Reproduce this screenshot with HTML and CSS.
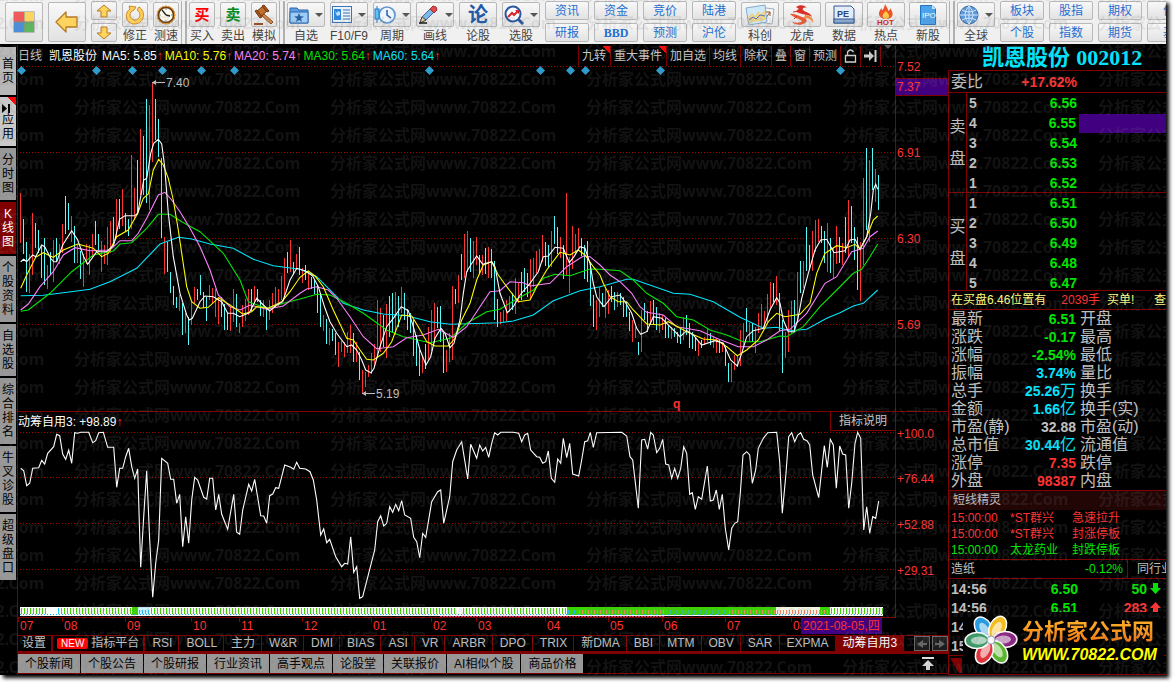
FILE: index.html
```html
<!DOCTYPE html>
<html lang="zh-CN">
<head>
    <meta charset="UTF-8">
    <meta name="viewport" content="width=device-width, initial-scale=1.0">
    <title>凯恩股份 002012</title>
    <link rel="stylesheet" href="styles.css">
</head>
<body>
    <div class="app">
        <!-- Toolbar -->
        <header class="toolbar">
            <div class="group">
                <button class="big" aria-label="主页"><svg width="22" height="22" viewBox="0 0 22 22"><rect x=".5" y=".5" width="21" height="21" fill="#888"/><rect x="1" y="1" width="9.500" height="9.500" fill="#f05a5a"/><rect x="11.500" y="1" width="9.500" height="9.500" fill="#f7d560"/><rect x="1" y="11.500" width="9.500" height="9.500" fill="#4a8fd8"/><rect x="11.500" y="11.500" width="9.500" height="9.500" fill="#5cb85c"/></svg></button>
                <button class="big" aria-label="返回"><svg width="24" height="22" viewBox="0 0 24 22"><path d="M1 11 11 1V6H22V16H11V21Z" fill="#ffd45e" stroke="#b57a22" stroke-width="1.300" stroke-linejoin="round"/></svg></button>
                <div class="stack">
                    <button class="small" aria-label="向上"><svg width="16" height="14" viewBox="0 0 16 14"><path d="M8 1 15 7H11V13H5V7H1Z" fill="#ffd45e" stroke="#b57a22" stroke-linejoin="round"/></svg></button>
                    <button class="small" aria-label="向下"><svg width="16" height="14" viewBox="0 0 16 14"><path d="M8 13 1 7H5V1H11V7H15Z" fill="#ffd45e" stroke="#b57a22" stroke-linejoin="round"/></svg></button>
                </div>
                <button class="tool narrow"><span class="face"><svg width="20" height="20" viewBox="0 0 20 20"><path d="M4 1 11 2 9 5C6 6 5 8 5 10A5 5 0 0 0 15 10C15 8 14 6 12 5L14 2C21 6 20 18 10 19C0 19-1 8 5 4Z" fill="#ffcf5a" stroke="#c98a2a"/></svg></span><span>修正</span></button>
                <button class="tool narrow"><span class="face"><svg width="20" height="20" viewBox="0 0 20 20"><circle cx="10" cy="10" r="8" fill="#fffdf0" stroke="#6b3a12" stroke-width="2.500"/><circle cx="10" cy="10" r="8.800" fill="none" stroke="#e8a33a"/><path d="M10 10 6 5M10 10 14 11" stroke="#222" stroke-width="1.300"/><path d="M10 3V5M10 15V17M3 10H5M15 10H17" stroke="#888"/></svg></span><span>测速</span></button>
            </div>
            <i class="divider"></i>
            <div class="group">
                <button class="tool narrow"><span class="face buy">买</span><span>买入</span></button>
                <button class="tool narrow"><span class="face sell">卖</span><span>卖出</span></button>
                <button class="tool narrow"><span class="face"><svg width="22" height="22" viewBox="0 0 22 22"><path d="M11 10 20 18 18 20 9 12Z" fill="#d58a4a" stroke="#8a4a1a"/><path d="M3 8 10 2 14 7 7 13Z" fill="#c0702c" stroke="#6e3510"/><path d="M2 7 4 6 9 13 7 14ZM9 2 11 1 16 7 14 8Z" fill="#a85a20" stroke="#6e3510"/><path d="M1 19H10V21H1Z" fill="#9a4c1c"/></svg></span><span>模拟</span></button>
            </div>
            <i class="divider"></i>
            <div class="group">
                <button class="tool"><span class="face"><svg width="20" height="18" viewBox="0 0 20 18"><path d="M1 2H8L10 4H19V17H1Z" fill="#5d9de0" stroke="#2d67ac"/><path d="M1 6H19V17H1Z" fill="#9ccbf5" stroke="#2d67ac"/><path d="M10 7 11.300 10.300 15 10.500 12 12.500 13 16 10 14 7 16 8 12.500 5 10.500 8.700 10.300Z" fill="#2a5f9e"/></svg><b class="caret"></b></span><span>自选</span></button>
                <button class="tool"><span class="face"><svg width="20" height="18" viewBox="0 0 20 18"><rect x=".5" y=".5" width="19" height="16" fill="#eaf4ff" stroke="#3b74b8"/><rect x="2" y="3" width="7" height="11" fill="#2e86de"/><path d="M3 5 5 7 6 5 8 6V9L5 10Z" fill="#bde0ff"/><path d="M11 4H18M11 7H18M11 10H18M11 13H18" stroke="#3b6ea8"/></svg><b class="caret"></b></span><span>F10/F9</span></button>
                <button class="tool"><span class="face"><svg width="22" height="20" viewBox="0 0 22 20"><circle cx="13" cy="10" r="8" fill="#edf6ff" stroke="#5f95cc" stroke-width="1.700"/><path d="M13 5V10L17 13" fill="none" stroke="#2a5f9e" stroke-width="1.500"/><path d="M3 1V18" stroke="#2377c8"/><rect x="1" y="4" width="4" height="10" fill="#5ec3f2" stroke="#2377c8"/></svg><b class="caret"></b></span><span>周期</span></button>
                <button class="tool"><span class="face"><svg width="22" height="20" viewBox="0 0 22 20"><path d="M3 18 5 12 15 2 19 5 9 15Z" fill="#7eb7e8" stroke="#336b9e"/><path d="M13 4 16 1Q20 1 20 5L17 8Z" fill="#e04a4a" stroke="#a03030"/><path d="M3 18 5 12 9 15Z" fill="#f3d2a2" stroke="#444"/><path d="M2 18H10" stroke="#111" stroke-width="1.500"/></svg><b class="caret"></b></span><span>画线</span></button>
                <button class="tool"><span class="face lun">论</span><span>论股</span></button>
                <button class="tool"><span class="face"><svg width="20" height="20" viewBox="0 0 20 20"><circle cx="9" cy="9" r="7.500" fill="#f8fbff" stroke="#2c559e" stroke-width="2"/><path d="M14.500 14.500 19 19" stroke="#2c559e" stroke-width="3"/><path d="M4 12 8 8 10 10 14 6" fill="none" stroke="#d8232a" stroke-width="2"/><path d="M11 5H15V9Z" fill="#d8232a"/></svg><b class="caret"></b></span><span>选股</span></button>
                <div class="links"><button>资讯</button><button>资金</button><button>竞价</button><button>陆港</button><button>研报</button><button class="latin">BBD</button><button>预测</button><button>沪伦</button></div>
                <div class="group close">
                    <button class="tool"><span class="face"><svg width="30" height="22" viewBox="0 0 30 22"><path d="M13 3 29 5 27 20 12 18Z" fill="#f5f7f8" stroke="#a5adb5"/><path d="M25 8H21M25 8V12M25 8 21 14" stroke="#9a5028" fill="none"/><path d="M1 4 20 1 22 18 4 21Z" fill="#cde9fa" stroke="#88a9c3"/><path d="M3 13 7 9 10 12 13 7 16 10 20 6V16L4 19Z" fill="#eed38c"/><path d="M4 16 8 13 11 15 15 11 20 12" fill="none" stroke="#4b78c8"/></svg></span><span>科创</span></button>
                    <button class="tool"><span class="face"><svg width="26" height="22" viewBox="0 0 26 22"><path d="M7 3C11 0 16 1 18 4C15 3 13 4 14 6C16 8 22 9 23 13C19 10 14 11 10 9C6 8 7 6 10 5Z" fill="#d93025"/><path d="M1 10C6 9 9 12 13 13C18 14 19 17 16 19C12 22 6 21 3 18C8 19 12 19 13 17C9 14 5 14 1 10Z" fill="#ea5a33"/><path d="M16 11C21 11 25 14 24 19C22 15 19 14 15 14Z" fill="#f08b4b"/><path d="M4 8 10 7M8 12 5 15" stroke="#d93025"/></svg></span><span>龙虎</span></button>
                    <button class="tool"><span class="face"><svg width="22" height="20" viewBox="0 0 22 20"><path d="M1 1H18L21 4V18H1Z" fill="#e3ecf8" stroke="#35598e"/><rect x="1" y="14" width="20" height="4" fill="#8aa9d2" stroke="#35598e"/><text x="4" y="12" class="pe">PE</text></svg></span><span>数据</span></button>
                    <button class="tool"><span class="face"><svg width="20" height="22" viewBox="0 0 20 22"><path d="M9 0C11 4 12 4 12 7 14 6 14 5 14 4 18 9 18 15 10 15 2 15 1 8 6 4 5 8 8 6 9 0Z" fill="#ef5426"/><path d="M10 7C13 10 15 14 10 15 5 14 6 10 10 7Z" fill="#ffcc4a"/><text x="1" y="21" class="hot">HOT</text></svg></span><span>热点</span></button>
                    <button class="tool"><span class="face"><svg width="16" height="20" viewBox="0 0 16 20"><path d="M.5.5H12L15.500 4V19.500H.5Z" fill="#4ba3eb" stroke="#2374bc"/><path d="M12 .5V4H15.500Z" fill="#c9e6ff"/><text x="2" y="13" class="ipo">IPO</text></svg></span><span>新股</span></button>
                </div>
            </div>
            <i class="divider"></i>
            <div class="group">
                <button class="tool"><span class="face"><svg width="20" height="20" viewBox="0 0 20 20"><circle cx="10" cy="10" r="9" fill="#5c97d8" stroke="#3c6ca4"/><path d="M1 10H19M10 1V19M3 5Q10 9 17 5M3 15Q10 11 17 15M10 1Q2 9 10 19M10 1Q18 9 10 19" fill="none" stroke="#d3e8fb"/></svg><b class="caret"></b></span><span>全球</span></button>
                <div class="links"><button>板块</button><button>股指</button><button>期权</button><button>债</button><button>个股</button><button>指数</button><button>期货</button><button>基</button></div>
            </div>
        </header>

        <div class="workspace">
            <!-- Side tabs -->
            <nav class="sidebar">
                <button>首页</button>
                <button class="light"><svg width="10" height="9" viewBox="0 0 10 9"><path d="M0 0 5 4.500 0 9Z"/><path d="M7 0V9" stroke="#000" stroke-width="2"/></svg>应用</button>
                <button>分时图</button>
                <button class="active">K线图</button>
                <button>个股资料</button>
                <button>自选股</button>
                <button>综合排名</button>
                <button>牛叉诊股</button>
                <button>超级盘口</button>
            </nav>

            <!-- Charts -->
            <main class="charts">
                <div class="pane-head">
                    <div class="legend">
                        <span class="muted">日线</span>
                        <span class="name">凯恩股份</span>
                        <span>MA5: 5.85<i>↑</i></span>
                        <span class="ma10">MA10: 5.76<i>↑</i></span>
                        <span class="ma20">MA20: 5.74<i>↑</i></span>
                        <span class="ma30">MA30: 5.64<i>↑</i></span>
                        <span class="ma60">MA60: 5.64<i>↑</i></span>
                    </div>
                    <div class="actions">
                        <button class="flag">九转</button>
                        <button class="flag">重大事件</button>
                        <button>加自选</button>
                        <button>均线</button>
                        <button>除权</button>
                        <button>叠</button>
                        <button>窗</button>
                        <button>预测</button>
                        <button aria-label="解锁"><svg width="13" height="14" viewBox="0 0 13 14"><path d="M1.500 6.500H11.500V13H1.500ZM3.500 6V3Q6.500-1 9.500 3" fill="none" stroke="#d0d0d0" stroke-width="1.300"/></svg></button>
                        <button aria-label="到末尾"><svg width="13" height="12" viewBox="0 0 13 12"><path d="M0 4.500H5V1L10 6 5 11V7.500H0Z" fill="#d0d0d0"/><path d="M11.500 0V12" stroke="#d0d0d0" stroke-width="2"/></svg></button>
                        <button aria-label="更多"><b class="caret"></b></button>
                    </div>
                </div>
                <svg id="priceChart" viewBox="18 66 930 346"></svg>
                <div class="pane-head sub">
                    <div class="legend"><span>动筹自用3: +98.89<i>↑</i></span></div>
                    <div class="actions"><button class="note">指标说明</button></div>
                </div>
                <svg id="indicatorChart" viewBox="18 431 930 204"></svg>

                <div class="tabs">
                    <button>设置</button>
                    <button class="platform"><span class="new">NEW</span>指标平台</button>
                    <button>RSI</button><button>BOLL</button><button>主力</button><button>W&amp;R</button><button>DMI</button><button>BIAS</button><button>ASI</button><button>VR</button><button>ARBR</button><button>DPO</button><button>TRIX</button><button>新DMA</button><button>BBI</button><button>MTM</button><button>OBV</button><button>SAR</button><button>EXPMA</button>
                    <button class="active">动筹自用3</button>
                    <div class="scroll">
                        <button aria-label="向左"><svg width="10" height="8" viewBox="0 0 10 8"><path d="M0 4 6 0V3H10V5H6V8Z" fill="#666"/></svg></button>
                        <button aria-label="向右"><svg width="10" height="8" viewBox="0 0 10 8"><path d="M10 4 4 0V3H0V5H4V8Z" fill="#666"/></svg></button>
                    </div>
                </div>
                <div class="news">
                    <button>个股新闻</button><button>个股公告</button><button>个股研报</button><button>行业资讯</button><button>高手观点</button><button>论股堂</button><button>关联报价</button><button>AI相似个股</button><button>商品价格</button>
                    <svg class="top" width="12" height="13" viewBox="0 0 12 13"><path d="M0 0H12V2H0ZM6 3 12 9H8V13H4V9H0Z" fill="#ddd"/></svg>
                </div>
            </main>

            <!-- Quote panel -->
            <aside class="quote">
                <h1>凯恩股份 <span>002012</span></h1>
                <div class="panel">
                    <div class="ratio"><span>委比</span><b class="red">+17.62%</b></div>
                    <div class="book">
                        <div class="side">卖<br>盘</div>
                        <table>
                            <tr><th>5</th><td>6.56</td><td></td></tr>
                            <tr><th>4</th><td>6.55</td><td class="fill"></td></tr>
                            <tr><th>3</th><td>6.54</td><td></td></tr>
                            <tr><th>2</th><td>6.53</td><td></td></tr>
                            <tr><th>1</th><td>6.52</td><td></td></tr>
                        </table>
                    </div>
                    <div class="book bids">
                        <div class="side">买<br>盘</div>
                        <table>
                            <tr><th>1</th><td>6.51</td><td></td></tr>
                            <tr><th>2</th><td>6.50</td><td></td></tr>
                            <tr><th>3</th><td>6.49</td><td></td></tr>
                            <tr><th>4</th><td>6.48</td><td></td></tr>
                            <tr><th>5</th><td>6.47</td><td></td></tr>
                        </table>
                    </div>
                    <div class="ticker"><span>在买盘6.46位置有</span><span class="red">2039手</span><span>买单!</span><span class="next">查</span></div>
                    <table class="stats">
                        <tr><th>最新</th><td class="green">6.51</td><th>开盘</th><td></td></tr>
                        <tr><th>涨跌</th><td class="green">-0.17</td><th>最高</th><td></td></tr>
                        <tr><th>涨幅</th><td class="green">-2.54%</td><th>最低</th><td></td></tr>
                        <tr><th>振幅</th><td class="cyan">3.74%</td><th>量比</th><td></td></tr>
                        <tr><th>总手</th><td class="cyan">25.26<span>万</span></td><th>换手</th><td></td></tr>
                        <tr><th>金额</th><td class="cyan">1.66<span>亿</span></td><th>换手(实)</th><td></td></tr>
                        <tr><th>市盈(静)</th><td>32.88</td><th>市盈(动)</th><td></td></tr>
                        <tr><th>总市值</th><td class="cyan">30.44<span>亿</span></td><th>流通值</th><td class="cyan">30</td></tr>
                        <tr><th>涨停</th><td class="red">7.35</td><th>跌停</th><td></td></tr>
                        <tr><th>外盘</th><td class="red">98387</td><th>内盘</th><td class="green">15</td></tr>
                    </table>
                    <h2>短线精灵</h2>
                    <table class="alerts">
                        <tr class="red"><td>15:00:00</td><td>*ST群兴</td><td>急速拉升</td></tr>
                        <tr class="red"><td>15:00:00</td><td>*ST群兴</td><td>封涨停板</td></tr>
                        <tr class="green"><td>15:00:00</td><td>太龙药业</td><td>封跌停板</td></tr>
                    </table>
                    <div class="sector"><span>造纸</span><span class="green">-0.12%</span><a href="#">同行业</a></div>
                    <table class="trades">
                        <tr><th>14:56</th><td>6.50</td><td>50</td><td><svg width="11" height="12" viewBox="0 0 11 12"><path d="M3 0H8V5H11L5.500 11 0 5H3Z" fill="#00e600"/></svg></td></tr>
                        <tr><th>14:56</th><td>6.51</td><td class="red">283</td><td><svg width="11" height="12" viewBox="0 0 11 12"><path d="M3 11H8V6H11L5.500 0 0 6H3Z" fill="#ff3232"/></svg></td></tr>
                        <tr><th>14</th><td></td><td></td><td></td></tr>
                        <tr><th>15</th><td></td><td></td><td></td></tr>
                    </table>
                    <div class="panel-foot"><svg width="12" height="15" viewBox="0 0 12 15"><path d="M0 0H12V15H9Z" fill="#800000"/></svg></div>
                </div>
                <div class="brand">
                    <svg width="54" height="52" viewBox="0 0 54 52">
                        <g stroke="#fff" stroke-width="1.500">
                            <ellipse cx="27" cy="12" rx="8" ry="12" transform="rotate(-32 27 26)" fill="#2b9be0"/>
                            <ellipse cx="27" cy="12" rx="8" ry="12" transform="rotate(28 27 26)" fill="#f2bd22"/>
                            <ellipse cx="27" cy="12" rx="8" ry="12" transform="rotate(88 27 26)" fill="#8d2483"/>
                            <ellipse cx="27" cy="12" rx="8" ry="12" transform="rotate(148 27 26)" fill="#5cb531"/>
                            <ellipse cx="27" cy="12" rx="8" ry="12" transform="rotate(208 27 26)" fill="#e0343c"/>
                            <ellipse cx="27" cy="12" rx="8" ry="12" transform="rotate(268 27 26)" fill="#3d9a68"/>
                        </g>
                        <g fill="#fff" opacity=".6">
                            <ellipse cx="27" cy="14" rx="4" ry="8" transform="rotate(-32 27 26)"/>
                            <ellipse cx="27" cy="14" rx="4" ry="8" transform="rotate(28 27 26)"/>
                            <ellipse cx="27" cy="14" rx="4" ry="8" transform="rotate(88 27 26)"/>
                            <ellipse cx="27" cy="14" rx="4" ry="8" transform="rotate(148 27 26)"/>
                            <ellipse cx="27" cy="14" rx="4" ry="8" transform="rotate(208 27 26)"/>
                            <ellipse cx="27" cy="14" rx="4" ry="8" transform="rotate(268 27 26)"/>
                        </g>
                        <circle cx="27" cy="26" r="4" fill="#fff" stroke="#9ab"/>
                    </svg>
                    <div><strong>分析家公式网</strong><em>WWW.70822.COM</em></div>
                </div>
            </aside>
        </div>

        <svg class="watermark" aria-hidden="true">
            <defs>
                <pattern id="mark" x="66" y="65" width="256" height="28" patternUnits="userSpaceOnUse">
                    <text x="8" y="20">分析家公式网www.70822.Com</text>
                </pattern>
            </defs>
            <rect width="100%" height="100%" fill="url(#mark)"/>
        </svg>
    </div>
    <script src="chart.js"></script>
</body>
</html>
```
FILE: styles.css
```css
* {
    box-sizing: border-box;
}
body {
    margin: 0;
    background: #fff;
    font-family: "Liberation Sans", "Noto Sans CJK SC", sans-serif;
    font-size: 12px;
    line-height: 16px;
    overflow: hidden;
}
button {
    margin: 0;
    padding: 0;
    border: 0;
    background: none;
    color: inherit;
    font: inherit;
    white-space: nowrap;
    cursor: pointer;
}
svg {
    display: block;
    flex: none;
}
table {
    border-collapse: collapse;
    table-layout: fixed;
    width: 100%;
}
th, td {
    padding: 0;
    text-align: left;
    white-space: nowrap;
}
.red { color: #ff3232; }
.green { color: #00e600; }
.cyan { color: #00e6ff; }

.app {
    position: relative;
    margin: 0 9px 7px 0;
    background: #000;
    color: #c0c0c0;
    box-shadow: 3px 3px 4px #000;
}

/* toolbar */
.toolbar {
    display: flex;
    height: 46px;
    padding: 1px 0 0 5px;
    overflow: hidden;
    background: #f0f0f0;
    border-bottom: 2px solid #000;
    color: #444;
}
.group {
    display: flex;
    flex: none;
    gap: 5px;
}
.close {
    gap: 4px;
}
.divider {
    flex: none;
    width: 6px;
    height: 43px;
    margin: 0 2px;
    border: solid #b0b0b0;
    border-width: 0 2px 0 1px;
}
.big, .small, .face, .links button {
    display: flex;
    align-items: center;
    justify-content: center;
    border: 1px solid #b8b8b8;
    border-radius: 2px;
    background: linear-gradient(#f8f8f8, #e2e2e2);
}
.big {
    width: 38px;
    height: 40px;
    margin-top: 1px;
}
.stack {
    display: flex;
    flex-direction: column;
    gap: 3px;
}
.small {
    width: 26px;
    height: 19px;
}
.tool {
    display: flex;
    flex-direction: column;
    align-items: center;
    width: 38px;
    padding-top: 1px;
}
.narrow {
    width: 26px;
}
.face {
    width: 100%;
    height: 25px;
    margin-bottom: 1px;
}
.buy, .sell, .lun {
    font-size: 15px;
    font-weight: bold;
}
.buy { color: #f00; }
.sell { color: #008a20; }
.lun {
    color: #1f5aa8;
    font-size: 20px;
}
.caret {
    width: 0;
    border: 4px solid transparent;
    border-top-color: #555;
    border-bottom: 0;
}
.face .caret {
    margin-left: 6px;
}
.links {
    display: grid;
    grid-template-columns: repeat(4, 44px);
    grid-auto-rows: 19px;
    gap: 3px 5px;
    color: #1e6fd0;
}
.latin {
    font-family: "Liberation Serif", serif;
    font-weight: bold;
}
.pe {
    font: bold 9px "Liberation Sans", sans-serif;
    fill: #25477c;
}
.hot {
    font: bold 8px "Liberation Sans", sans-serif;
    fill: #d81e1e;
}
.ipo {
    font: 8px "Liberation Sans", sans-serif;
    fill: #fff;
}

.workspace {
    display: flex;
}

/* side tabs */
.sidebar {
    display: flex;
    flex: none;
    flex-direction: column;
    gap: 2px;
    width: 18px;
    padding-top: 1px;
    border-right: 1px solid #800000;
}
.sidebar button {
    width: 16px;
    padding: 5px 2px;
    background: #989898;
    color: #000;
    line-height: 14px;
    white-space: normal;
    word-break: break-all;
}
.sidebar button:first-child {
    padding: 10px 2px;
    background: #b8b8b8;
}
.sidebar .light {
    padding-top: 7px;
    background: linear-gradient(225deg, #f00 6px, #c8c8c8 6px);
}
.sidebar .active {
    background: #800000;
    color: #fff;
}

/* charts */
.charts {
    flex: 1;
    min-width: 0;
}
.charts > svg {
    width: 100%;
    height: auto;
    overflow: visible;
}
.pane-head {
    display: flex;
    justify-content: space-between;
    height: 20px;
    margin-right: 52px;
    border-right: 1px solid #800000;
    color: #fff;
}
.sub {
    height: 19px;
}
.legend {
    display: flex;
    gap: 2px;
    line-height: 20px;
    white-space: nowrap;
}
.legend i {
    color: #ff3232;
    font-style: normal;
}
.muted {
    color: #c0c0c0;
}
.name {
    padding: 0 3px 0 5px;
}
.ma10 { color: #ff0; }
.ma20 { color: #ff80ff; }
.ma30 { color: #00e600; }
.ma60 { color: #00e6ff; }
.actions {
    display: flex;
    color: #c8c8c8;
}
.actions button {
    padding: 0 3px;
    border-left: 1px solid #800000;
}
.actions .flag {
    padding-right: 4px;
    background: linear-gradient(225deg, #f00 5px, transparent 5px);
}
.actions .note {
    padding: 0 8px;
    border-bottom: 1px solid #800000;
}
.axis-text {
    font-size: 12px;
    fill: #ff3232;
}
.tabs {
    display: flex;
    height: 19px;
    border-top: 1px solid #800000;
    border-bottom: 3px solid #800000;
}
.tabs > button {
    padding: 0 6px 0 7px;
    border-right: 1px solid #800000;
    line-height: 15px;
}
.tabs > button:first-child {
    padding: 0 5px 0 4px;
    border-right-width: 2px;
}
.tabs > .platform {
    padding: 0 4px;
    border-right-width: 2px;
}
.new {
    margin-right: 3px;
    padding: 0 4px;
    border-radius: 2px;
    background: #f00;
    color: #fff;
    font-size: 10px;
}
.tabs > .active {
    background: #800000;
    color: #fff;
}
.scroll {
    display: flex;
    gap: 2px;
    margin-left: auto;
}
.scroll button {
    display: grid;
    place-items: center;
    width: 16px;
    border: 1px solid #666;
    background: #1c1c1c;
}
.news {
    display: flex;
    gap: 1px;
    height: 20px;
    border-bottom: 1px solid #800000;
    color: #000;
}
.news button {
    padding: 0 7px;
    background: #989898;
}
.news .top {
    margin: 3px 14px 0 auto;
}

/* quote panel */
.quote {
    position: relative;
    flex: none;
    width: 218px;
    overflow: hidden;
}
h1 {
    margin: 0;
    padding-left: 34px;
    color: #00e6ff;
    font-size: 22px;
    line-height: 24px;
    white-space: nowrap;
}
h1 span {
    font-family: "Liberation Serif", serif;
}
.panel {
    border: 1px solid #800000;
    border-right: 0;
}
.panel b, .book, .stats td, .trades {
    font-size: 14px;
    font-weight: bold;
}
.ratio {
    display: flex;
    justify-content: space-between;
    height: 22px;
    padding: 0 89px 0 2px;
    border-bottom: 1px solid #800000;
    font-size: 16px;
    line-height: 22px;
}
.book {
    display: flex;
    height: 100px;
    border-bottom: 1px solid #800000;
}
.bids {
    height: 98px;
}
.side {
    display: grid;
    flex: none;
    width: 18px;
    padding-top: 18px;
    border-right: 1px solid #800000;
    font-size: 16px;
    font-weight: normal;
    line-height: 32px;
    text-align: center;
    align-content: start;
}
.book tr {
    height: 20px;
}
.book th {
    width: 54px;
    padding-left: 2px;
}
.book td {
    width: 57px;
    padding-right: 1px;
    color: #00e600;
    text-align: right;
}
.book td:last-child {
    width: auto;
}
.book .fill {
    border: solid #000;
    border-width: 1px 0 0 2px;
    background: #400080;
}
.ticker {
    display: flex;
    height: 19px;
    padding-left: 2px;
    border-bottom: 1px solid #800000;
    color: #ffff80;
    line-height: 18px;
    white-space: nowrap;
}
.ticker .red {
    margin: 0 7px 0 15px;
}
.ticker .next {
    margin-left: auto;
}
.stats tr {
    height: 18px;
    line-height: 18px;
}
.stats th {
    width: 60px;
    padding-left: 2px;
    font-size: 16px;
    font-weight: normal;
}
.stats td {
    width: 67px;
    text-align: right;
}
.stats th:nth-child(3) {
    width: 76px;
    padding-left: 4px;
}
.stats td span {
    font-size: 16px;
    font-weight: normal;
}
h2 {
    height: 20px;
    margin: 0;
    padding-left: 4px;
    border-top: 1px solid #800000;
    background: #220606;
    font-size: 12px;
    font-weight: normal;
    line-height: 18px;
}
.alerts {
    margin-bottom: 1px;
}
.alerts tr {
    height: 16px;
}
.alerts td {
    width: 62px;
    padding-left: 2px;
}
.alerts td:first-child {
    width: 59px;
}
.alerts td:last-child {
    width: auto;
}
.sector {
    display: flex;
    justify-content: space-between;
    height: 20px;
    padding-left: 2px;
    border: solid #800000;
    border-width: 1px 0;
    line-height: 18px;
    white-space: nowrap;
}
.sector .green {
    margin-left: auto;
    padding-right: 4px;
}
.sector a {
    width: 39px;
    padding-left: 9px;
    border-left: 1px solid #800000;
    color: inherit;
    text-decoration: none;
}
.trades tr {
    height: 19px;
}
.trades th {
    width: 60px;
    padding-left: 2px;
}
.trades td {
    width: 69px;
    color: #00e600;
    text-align: right;
}
.trades .red {
    color: #ff3232;
}
.trades td:last-child {
    width: auto;
    padding-left: 3px;
}
.panel-foot {
    height: 19px;
    padding: 2px 0 0 1px;
    border-top: 1px solid #800000;
}
.brand {
    position: absolute;
    right: 2px;
    bottom: 4px;
    display: flex;
    gap: 4px;
    width: 201px;
    height: 59px;
    padding: 2px 0 0 1px;
    background: #000;
    white-space: nowrap;
}
.brand strong {
    display: block;
    margin-top: 4px;
    background: linear-gradient(#ffb52e, #f07010);
    background-clip: text;
    color: transparent;
    font-size: 22px;
    line-height: 28px;
}
.brand em {
    color: #ff0;
    font-size: 16px;
    font-weight: bold;
    line-height: 18px;
}

.watermark {
    position: absolute;
    inset: 0;
    width: 100%;
    height: 100%;
    overflow: hidden;
    pointer-events: none;
    opacity: .14;
}
.watermark text {
    font: bold 16px "DejaVu Sans", "Noto Sans CJK SC", sans-serif;
    font-family: "Noto Sans", "Noto Sans CJK SC", sans-serif;
    fill: #808080;
}
```
FILE: chart.js
```javascript
const NS = 'http://www.w3.org/2000/svg';
const price = document.getElementById('priceChart');
const indicator = document.getElementById('indicatorChart');

// One bar per day, three units to a pixel: colour, high, low
const bars = `r220-370 c297-402 c366-515 r402-518 r280-465 c308-383 c330-400 c375-473 c354-494 r435-506
c396-465 r360-486 c355-425 r372-433 r312-398 c228-342 c249-330 r288-365 c318-430 r373-428
c393-476 r402-500 r373-433 r376-465 r343-412 c303-376 c341-397 r363-455 r375-433 r321-434
r303-400 c291-378 r237-350 c237-328 r207-318 c279-337 c297-348 r105-328 r204-300 c120-285
r27-225 c48-225 c-63-248 r-45-270 r-110-125 c-63-60 c-3-110 c115-353 r352-463 c366-455
c455-518 c497-556 c530-563 r525-573 c550-645 r578-640 c590-675 r545-615 r500-552 c508-540
c465-525 c516-565 c530-602 r495-540 r503-552 r508-590 r530-612 c530-590 c552-629 c580-630
r558-632 r507-607 c522-622 r608-640 r555-620 r537-602 r508-585 c508-573 r498-552 c507-545
c540-588 r540-590 c565-630 r540-600 r520-578 r500-560 r508-558 r468-540 r413-535 c395-460
r360-455 c425-465 r402-450 c380-465 r445-488 c435-480 r455-510 c470-507 c480-522 c495-580
c520-620 r585-632 c597-672 r625-675 c628-662 c640-705 r665-740 r662-695 r665-712 r635-700
r615-698 c640-725 r665-725 c695-780 r750-820 r755-800 r735-770 r700-762 r673-740 r540-715
r563-695 c585-682 r552-713 c528-652 c520-640 r515-645 c528-622 r500-580 c518-600 c568-630
c580-640 c600-708 c645-738 c690-768 r710-760 c672-748 r620-720 r570-692 r550-668 c560-625
c558-665 c640-758 r690-755 r640-725 r497-720 c508-552 r465-550 c402-480 r342-475 r333-455
c354-455 r363-475 r350-435 c405-462 r405-465 c385-463 r380-475 c388-475 c423-600 c537-620
r575-612 r570-605 r540-602 r528-575 c520-570 r475-582 r488-550 c455-540 c445-515 c460-530
r418-538 r415-500 r393-460 r387-450 r345-425 c366-438 c375-445 r333-440 c288-372 c320-402
r350-415 c375-477 r220-465 r410-518 r318-447 r343-402 r323-385 c355-407 c375-477 c363-487
c425-558 c525-620 r540-630 r500-590 c518-560 r508-593 r510-582 c498-545 c515-570 r515-560
c520-555 c530-590 c545-590 c575-632 r600-665 r620-655 c665-705 r570-695 c548-600 c572-635
r543-605 c540-612 c560-630 r580-640 r585-630 c595-655 c615-655 r620-657 c625-650 c635-670
c625-672 r590-660 c585-645 c610-685 c635-688 c655-692 r665-708 c660-685 r650-675 r625-665
c640-675 r650-685 r655-698 c660-698 r665-695 c680-738 c728-785 r728-785 r705-750 r705-740
r630-738 r610-680 c563-635 r610-665 c610-665 r620-698 r578-640 r552-625 r572-625 r522-605
r487-568 c490-545 r468-555 c518-632 c600-758 r635-715 r570-695 r543-640 c540-635 r457-610
c423-520 r423-505 c321-452 c375-447 r333-452 r300-395 r297-365 c318-370 c333-430 r309-455
c355-460 r385-475 r318-433 c350-430 r370-435 c291-400 r240-410 c258-370 c320-420 c350-510
r365-542 r174-435 c84-330 r120-365 c84-210 r147-245 c165-270`;

const averages = [
    ['#00e6ff', '62,527 130,526 190,518 270,508 330,485 410,445 480,372 535,352 575,357 630,372 700,385 760,418 820,437 900,448 950,470 980,500 1030,550 1090,570 1150,582 1220,587 1290,605 1350,613 1500,608 1540,603 1600,585 1660,542 1740,512 1800,500 1880,478 1900,478 2020,520 2070,523 2140,545 2220,592 2290,625 2330,622 2370,632 2420,628 2480,595 2520,578 2560,558 2590,550 2633,510'],
    ['#00e600', '62,574 85,570 150,520 215,455 280,405 340,393 360,372 395,368 440,325 475,283 510,283 545,305 600,335 670,400 720,480 745,545 800,565 850,550 900,537 950,523 990,525 1040,550 1090,580 1160,630 1210,650 1290,668 1350,655 1400,610 1460,575 1500,568 1545,540 1600,510 1630,475 1665,463 1710,467 1770,447 1800,448 1860,452 1900,480 1940,520 1990,550 2030,590 2080,600 2130,630 2180,645 2230,665 2280,665 2340,648 2360,650 2410,620 2460,560 2510,510 2560,460 2585,448 2610,410 2633,372'],
    ['#ff80ff', '62,570 85,552 120,500 160,455 190,405 225,383 270,392 330,390 360,362 395,362 415,340 440,295 475,225 495,217 515,240 540,275 570,325 600,380 630,450 655,525 690,560 720,570 750,555 800,568 850,558 900,520 920,507 950,500 985,510 1010,535 1050,590 1090,650 1130,686 1180,680 1220,653 1270,645 1315,628 1360,652 1400,620 1440,560 1470,515 1500,512 1530,485 1570,488 1590,498 1650,490 1700,440 1750,408 1770,410 1800,435 1830,465 1860,485 1895,520 1920,560 1940,577 1990,585 2030,620 2100,632 2150,655 2215,680 2260,680 2300,660 2340,632 2370,628 2420,580 2475,490 2510,470 2555,395 2590,385 2610,350 2633,333'],
    ['#ffff00', '62,505 80,465 107,412 130,398 160,412 190,390 233,372 280,385 305,410 325,400 350,350 385,330 413,280 430,235 445,222 460,150 476,118 490,135 505,175 520,240 535,330 548,420 560,500 575,545 600,565 625,562 656,533 690,555 728,582 755,575 770,560 805,565 845,545 870,515 900,472 925,453 945,468 970,500 1000,570 1040,655 1060,660 1080,690 1100,718 1120,720 1150,700 1175,665 1205,585 1235,588 1255,620 1280,665 1305,678 1345,678 1365,655 1385,600 1410,550 1430,480 1450,435 1475,425 1495,465 1520,500 1555,545 1590,540 1610,500 1640,450 1680,397 1710,405 1735,390 1755,405 1780,440 1800,465 1810,490 1830,530 1855,545 1880,545 1900,570 1940,612 1980,615 2005,605 2060,635 2110,657 2150,660 2180,680 2212,707 2240,690 2275,660 2305,605 2330,580 2355,590 2400,583 2430,550 2450,460 2475,400 2510,377 2540,383 2565,373 2580,387 2600,350 2620,300 2633,288'],
    ['#ffffff', '62,425 71,418 80,425 98,405 107,410 125,375 134,380 152,415 161,425 170,425 188,375 215,332 233,360 251,410 263,433 290,395 320,395 341,375 359,297 375,287 404,287 413,280 431,180 440,175 452,100 461,70 475,58 485,72 494,140 505,280 520,410 540,520 560,585 568,600 577,595 600,545 615,528 640,530 665,545 683,580 700,580 719,590 748,578 770,535 790,555 809,573 830,555 848,545 870,480 890,445 917,453 938,468 955,500 975,565 990,605 1010,640 1040,680 1055,675 1070,690 1085,720 1097,750 1113,758 1122,745 1140,680 1160,620 1180,595 1204,560 1225,572 1240,620 1260,690 1278,735 1292,710 1305,655 1323,625 1335,640 1350,683 1362,670 1380,600 1390,520 1400,455 1412,435 1430,408 1448,433 1475,425 1485,440 1500,520 1522,578 1540,560 1560,525 1590,490 1615,455 1630,410 1645,408 1665,382 1690,385 1708,428 1722,410 1740,380 1755,385 1770,430 1780,490 1790,530 1800,545 1812,560 1835,530 1860,525 1875,545 1895,580 1910,625 1922,643 1940,635 1960,590 1985,595 2010,620 2040,650 2060,632 2080,645 2105,675 2145,662 2170,670 2192,720 2212,738 2225,700 2240,650 2260,632 2290,625 2310,570 2330,533 2340,550 2350,600 2365,635 2382,635 2393,600 2405,535 2425,460 2445,390 2462,360 2480,358 2502,398 2535,392 2550,360 2565,357 2580,388 2600,350 2612,280 2620,210 2627,193 2633,208']
];

const chips = '62,205 71,212 80,257 89,250 98,205 116,203 125,181 134,192 143,160 161,140 170,103 179,107 188,162 197,178 206,150 215,190 224,98 233,100 242,97 266,97 278,128 287,122 296,98 310,97 323,142 341,142 350,262 359,205 368,205 377,170 386,145 395,200 404,235 413,207 422,502 431,350 440,212 449,420 458,592 467,490 476,420 485,175 503,190 512,238 521,238 530,310 539,283 548,440 557,350 566,430 575,300 584,232 593,240 611,292 620,297 629,235 638,235 647,330 656,283 665,343 683,388 701,283 710,397 719,403 728,330 746,253 755,273 764,238 782,347 791,348 800,370 809,287 818,282 827,263 836,265 854,195 872,202 881,208 890,187 899,205 917,207 930,215 940,240 950,300 962,405 971,387 980,428 989,418 1007,470 1025,500 1034,490 1043,492 1052,410 1061,517 1070,500 1079,595 1088,590 1124,450 1133,365 1142,347 1151,378 1160,370 1169,320 1178,337 1187,313 1196,332 1205,302 1214,345 1232,355 1241,412 1250,425 1259,473 1268,400 1277,412 1295,305 1313,275 1322,270 1331,370 1349,290 1358,185 1370,150 1385,125 1403,237 1412,133 1430,175 1439,135 1448,153 1457,142 1466,172 1475,130 1484,98 1493,105 1502,97 1540,97 1556,100 1565,125 1574,105 1583,100 1592,150 1610,170 1619,172 1628,190 1637,185 1645,153 1654,235 1664,247 1673,177 1682,190 1690,115 1700,173 1709,130 1718,222 1736,228 1745,180 1754,125 1763,122 1771,97 1780,142 1790,98 1865,97 1880,108 1890,170 1898,180 1915,325 1925,120 1934,118 1943,147 1952,97 1960,105 1970,158 1979,145 1988,118 1997,192 2006,195 2015,235 2024,205 2033,235 2042,205 2051,140 2060,160 2069,283 2077,278 2086,328 2095,290 2105,298 2122,198 2131,303 2140,300 2149,270 2158,328 2167,283 2176,385 2186,450 2195,385 2204,370 2213,365 2221,280 2229,165 2240,155 2249,165 2257,250 2267,210 2275,145 2290,115 2303,98 2330,97 2339,185 2347,340 2358,220 2366,110 2375,98 2384,125 2393,105 2402,98 2411,118 2421,122 2429,135 2438,225 2456,293 2465,210 2473,137 2482,202 2491,118 2500,135 2509,265 2519,138 2528,162 2537,165 2546,325 2555,250 2565,130 2573,97 2582,115 2591,390 2600,320 2609,400 2618,350 2627,355 2636,303';

function add(parent, tag, attrs, text) {
    const el = document.createElementNS(NS, tag);
    for (const key in attrs) el.setAttribute(key, attrs[key]);
    if (text) el.textContent = text;
    parent.appendChild(el);
    return el;
}

function line(parent, x1, y1, x2, y2, stroke, dash) {
    const attrs = { x1, y1, x2, y2, stroke, 'shape-rendering': 'crispEdges' };
    if (dash) attrs['stroke-dasharray'] = dash;
    add(parent, 'line', attrs);
}

function label(parent, x, y, text, fill) {
    const el = add(parent, 'text', { x, y, class: 'axis-text' }, text);
    if (fill) el.style.fill = fill;
}

function curve(parent, points, top, stroke) {
    const scaled = points.split(' ').map(p => {
        const [x, y] = p.split(',');
        return `${(x / 3).toFixed(1)},${(top + y / 3).toFixed(1)}`;
    }).join(' ');
    add(parent, 'polyline', { points: scaled, fill: 'none', stroke, 'stroke-width': 1.1 });
}

function drawPrice() {
    add(price, 'rect', { x: 896, y: 78, width: 52, height: 17, fill: '#400080' });
    line(price, 896, 78.5, 948, 78.5, '#800000');
    line(price, 896, 95.5, 948, 95.5, '#800000');
    [66.5, 152.5, 238.5, 324.5].forEach(y => line(price, 20, y, 895, y, '#a00000', '1 2'));
    line(price, 895.5, 66, 895.5, 412, '#800000');
    line(price, 18, 411.5, 948, 411.5, '#800000');

    bars.split(/\s+/).forEach((bar, i) => {
        const [, colour, high, low] = bar.match(/^([rc])(-?\d+)-(\d+)$/);
        const x = 20.5 + i * 3;
        line(price, x, 120 + high / 3, x, 120 + low / 3, colour === 'r' ? '#ff3232' : '#54fcfc');
    });
    averages.forEach(([stroke, points]) => curve(price, points, 120, stroke));

    [21.5, 96.5, 132.5, 162.5, 201.5, 234.5, 429.5, 540.5, 570.5, 585.5, 660.5, 840.5].forEach(x => {
        add(price, 'path', { d: `M${x} 66l4.500 4.500-4.500 4.500-4.500-4.500z`, fill: '#2f9bca' });
    });

    [[152, 82.5, '7.40'], [362, 393.5, '5.19']].forEach(([x, y, text]) => {
        line(price, x, y, x + 13, y, '#c0c0c0');
        add(price, 'path', { d: `M${x} ${y}l4-2.500v5z`, fill: '#c0c0c0' });
        label(price, x + 14, y + 4, text, '#c0c0c0');
    });
    const q = add(price, 'text', { x: 673, y: 408, class: 'axis-text' }, 'q');
    q.style.fontWeight = 'bold';

    [[71, '7.52'], [91, '7.37'], [157, '6.91'], [243, '6.30'], [329, '5.69']].forEach(([y, text]) => label(price, 897, y, text));
}

function drawStrip() {
    add(indicator, 'rect', { x: 20, y: 607, width: 863, height: 9, fill: '#fff' });
    // [from, to, background, stroke]
    [
        [20, 47, '#fff', '#3cd400'],
        [57, 63, '#fff', '#20c0ff'],
        [63, 132, '#fff', '#3cd400'],
        [132, 138, '#3cd400', '#3cd400'],
        [138, 150, '#c8f4ff', '#20c0ff'],
        [150, 455, '#fff', '#3cd400'],
        [462, 567, '#fff', '#3cd400'],
        [567, 578, '#3cd400', '#20c0ff'],
        [578, 666, '#3cd400', '#e89060'],
        [666, 728, '#3cd400', '#30c890'],
        [728, 776, '#3cd400', '#e89060'],
        [776, 820, '#f4f4e0', '#f08070'],
        [820, 830, '#3cd400', '#e89060'],
        [830, 883, '#fff', '#3cd400']
    ].forEach(([from, to, bg, stroke]) => {
        add(indicator, 'rect', { x: from, y: 607, width: to - from, height: 8, fill: bg });
        for (let x = from + 1.5; x < to; x += 3) {
            line(indicator, x, bg === '#fff' ? 608 : 610, x, 614, stroke);
        }
    });
    line(indicator, 20, 614.5, 883, 614.5, '#20a0ff', '1 2');
    line(indicator, 440, 616.5, 665, 616.5, '#e03070', '2 1');
}

function drawIndicator() {
    [[433.5, '+100.0'], [478.5, '+76.44'], [524.5, '+52.88'], [570.5, '+29.31']].forEach(([y, text]) => {
        line(indicator, 20, y - 1, 895, y - 1, '#a00000', '1 2');
        label(indicator, 897, y + 4, text);
    });
    line(indicator, 895.5, 431, 895.5, 618, '#800000');
    line(indicator, 18, 617.5, 896, 617.5, '#800000');
    curve(indicator, chips, 400, '#fff');
    drawStrip();

    [[18, '07'], [62, '08'], [125, '09'], [191, '10'], [239, '11'], [302, '12'], [371, '01'], [431, '02'],
        [476, '03'], [545, '04'], [608, '05'], [662, '06'], [725, '07'], [791, '08']].forEach(([x, text]) => {
        line(indicator, x + 0.5, 618, x + 0.5, 622, '#800000');
        label(indicator, x + 2, 630, text);
    });
    add(indicator, 'rect', { x: 801, y: 618, width: 81, height: 16, fill: '#400080' });
    label(indicator, 803, 630, '2021-08-05,四');
}

drawPrice();
drawIndicator();
```
